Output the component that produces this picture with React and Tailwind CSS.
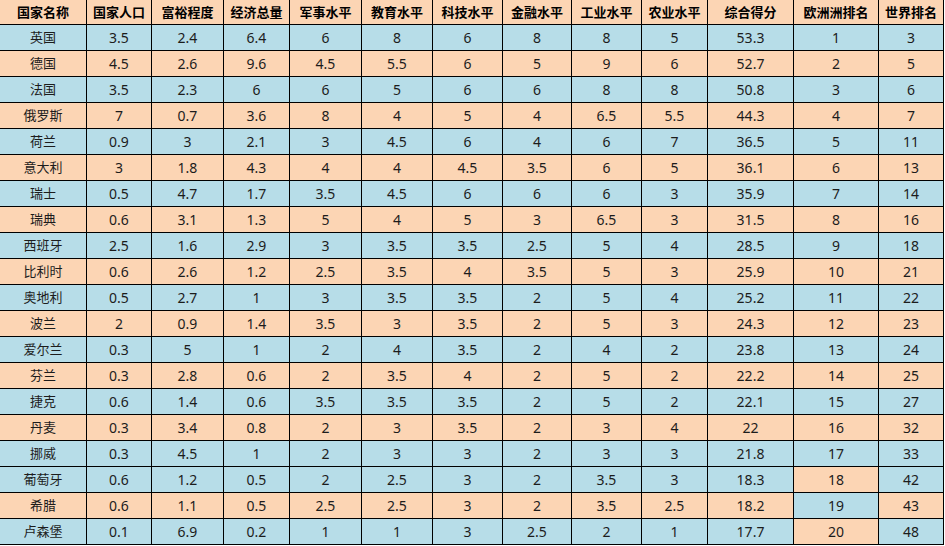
import React from 'react';

const BLUE = 'bg-[#b7dde8]';
const PEACH = 'bg-[#fcd5b4]';

const headers = ['国家名称', '国家人口', '富裕程度', '经济总量', '军事水平', '教育水平', '科技水平', '金融水平', '工业水平', '农业水平', '综合得分', '欧洲洲排名', '世界排名'];

const rows = [
  ['英国', '3.5', '2.4', '6.4', '6', '8', '6', '8', '8', '5', '53.3', '1', '3'],
  ['德国', '4.5', '2.6', '9.6', '4.5', '5.5', '6', '5', '9', '6', '52.7', '2', '5'],
  ['法国', '3.5', '2.3', '6', '6', '5', '6', '6', '8', '8', '50.8', '3', '6'],
  ['俄罗斯', '7', '0.7', '3.6', '8', '4', '5', '4', '6.5', '5.5', '44.3', '4', '7'],
  ['荷兰', '0.9', '3', '2.1', '3', '4.5', '6', '4', '6', '7', '36.5', '5', '11'],
  ['意大利', '3', '1.8', '4.3', '4', '4', '4.5', '3.5', '6', '5', '36.1', '6', '13'],
  ['瑞士', '0.5', '4.7', '1.7', '3.5', '4.5', '6', '6', '6', '3', '35.9', '7', '14'],
  ['瑞典', '0.6', '3.1', '1.3', '5', '4', '5', '3', '6.5', '3', '31.5', '8', '16'],
  ['西班牙', '2.5', '1.6', '2.9', '3', '3.5', '3.5', '2.5', '5', '4', '28.5', '9', '18'],
  ['比利时', '0.6', '2.6', '1.2', '2.5', '3.5', '4', '3.5', '5', '3', '25.9', '10', '21'],
  ['奥地利', '0.5', '2.7', '1', '3', '3.5', '3.5', '2', '5', '4', '25.2', '11', '22'],
  ['波兰', '2', '0.9', '1.4', '3.5', '3', '3.5', '2', '5', '3', '24.3', '12', '23'],
  ['爱尔兰', '0.3', '5', '1', '2', '4', '3.5', '2', '4', '2', '23.8', '13', '24'],
  ['芬兰', '0.3', '2.8', '0.6', '2', '3.5', '4', '2', '5', '2', '22.2', '14', '25'],
  ['捷克', '0.6', '1.4', '0.6', '3.5', '3.5', '3.5', '2', '5', '2', '22.1', '15', '27'],
  ['丹麦', '0.3', '3.4', '0.8', '2', '3', '3.5', '2', '3', '4', '22', '16', '32'],
  ['挪威', '0.3', '4.5', '1', '2', '3', '3', '2', '3', '3', '21.8', '17', '33'],
  ['葡萄牙', '0.6', '1.2', '0.5', '2', '2.5', '3', '2', '3.5', '3', '18.3', '18', '42'],
  ['希腊', '0.6', '1.1', '0.5', '2.5', '2.5', '3', '2', '3.5', '2.5', '18.2', '19', '43'],
  ['卢森堡', '0.1', '6.9', '0.2', '1', '1', '3', '2.5', '2', '1', '17.7', '20', '48'],
];

// 行底色, 最后三行不是严格交替
const rowColor = (i) => {
  if (i === 17) return BLUE;
  if (i === 18) return PEACH;
  if (i === 19) return BLUE;
  return i % 2 === 0 ? BLUE : PEACH;
};

// 欧洲排名这一列最后三行颜色反过来
const euroColor = (i) => {
  if (i === 17) return PEACH;
  if (i === 18) return BLUE;
  if (i === 19) return PEACH;
  return rowColor(i);
};

export default function App() {
  return (
    <div className="w-[945px] h-[546px] bg-white overflow-hidden font-['Noto_Sans','Noto_Sans_CJK_SC',sans-serif]">
      <div className="grid grid-cols-[87px_65px_72px_66px_72px_71px_70px_69px_70px_66px_86px_85px_65px] text-[#1c1c1c]">
        {/* --- HEADER --- */}
        {headers.map((h) => (
          <div key={h} className={`${PEACH} h-[25px] border-r border-b border-black flex items-center justify-center text-[13px] font-bold text-black leading-none`}>
            {h}
          </div>
        ))}

        {/* --- BODY --- */}
        {rows.map((row, i) =>
          row.map((cell, j) => (
            <div
              key={`${i}-${j}`}
              className={`${j === 11 ? euroColor(i) : rowColor(i)} h-[26px] border-r border-b border-black flex items-center justify-center leading-none ${j === 0 ? 'text-[13px]' : 'text-[14px]'}`}
            >
              {cell}
            </div>
          ))
        )}
      </div>
    </div>
  );
}
